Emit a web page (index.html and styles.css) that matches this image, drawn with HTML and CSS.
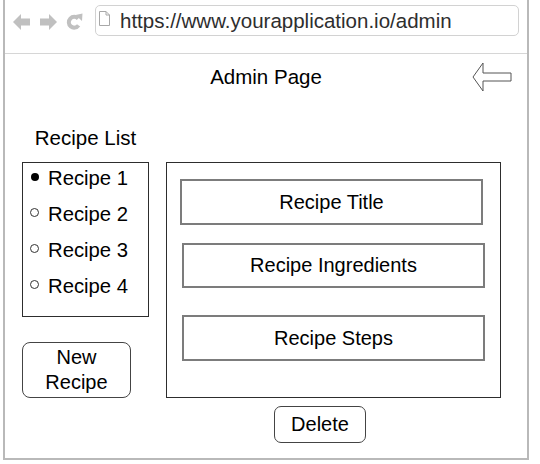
FILE: index.html
```html
<!DOCTYPE html>
<html lang="en">
<head>
<meta charset="utf-8">
<title>Admin Page</title>
<link rel="stylesheet" href="styles.css">
</head>
<body>
<div class="frame">
  <div class="toolbar">
    <svg class="nav-icon nav-back" width="17" height="16" viewBox="0 0 17 16"><polygon points="0,8 8,0 8,4.5 17,4.5 17,11.5 8,11.5 8,16"/></svg>
    <svg class="nav-icon nav-fwd" width="17" height="16" viewBox="0 0 17 16"><polygon points="17,8 9,0 9,4.5 0,4.5 0,11.5 9,11.5 9,16"/></svg>
    <svg class="nav-icon nav-reload" width="17" height="17" viewBox="0 0 17 17"><path d="M12.2 5.6 A5.4 5.4 0 1 0 12.6 12.4" fill="none" stroke="#c0c0c0" stroke-width="4"/><polygon points="9.5,2 16.5,0.5 16,8" fill="#c0c0c0"/></svg>
    <div class="address">
      <svg class="page-icon" width="11" height="15" viewBox="0 0 11 15"><path d="M0.5 0.5 H7 L10.5 4 V14.5 H0.5 Z" fill="none" stroke="#a8a8a8"/><path d="M7 0.5 V4 H10.5" fill="none" stroke="#a8a8a8"/></svg>
      <span class="url">https://www.yourapplication.io/admin</span>
    </div>
  </div>
  <div class="header">
    <h1 class="title">Admin Page</h1>
    <svg class="back-arrow" width="40" height="30" viewBox="0 0 40 30"><polygon points="1,15 11,1 11,11 39,11 39,19 11,19 11,29" fill="#fff" stroke="#555" stroke-width="1"/></svg>
  </div>
  <div class="main">
    <div class="left-col">
      <div class="list-title">Recipe List</div>
      <ul class="recipe-list">
        <li class="recipe-item"><span class="bullet filled"></span>Recipe 1</li>
        <li class="recipe-item"><span class="bullet hollow"></span>Recipe 2</li>
        <li class="recipe-item"><span class="bullet hollow"></span>Recipe 3</li>
        <li class="recipe-item"><span class="bullet hollow"></span>Recipe 4</li>
      </ul>
      <button class="btn btn-new">New<br>Recipe</button>
    </div>
    <div class="right-col">
      <div class="panel">
        <div class="field field-title">Recipe Title</div>
        <div class="field field-ingredients">Recipe Ingredients</div>
        <div class="field field-steps">Recipe Steps</div>
      </div>
      <button class="btn btn-delete">Delete</button>
    </div>
  </div>
</div>
</body>
</html>
```
FILE: styles.css
```css
* { box-sizing: border-box; }
html, body { margin: 0; padding: 0; background: #fff; }
body {
  font-family: "Liberation Sans", Arial, Helvetica, sans-serif;
  color: #000;
  overflow: hidden;
}
.frame {
  margin-left: 3px;
  width: 526px;
  height: 460px;
  border: 2px solid #b9b9b9;
  border-top: none;
}
.toolbar {
  height: 54px;
  border-bottom: 1px solid #d6d6d6;
  display: flex;
  align-items: flex-start;
  padding: 5px 0 0 8px;
}
.nav-icon { fill: #c0c0c0; flex: none; }
.nav-back { margin-top: 9px; }
.nav-fwd { margin-top: 9px; margin-left: 10px; }
.nav-reload { margin-top: 8px; margin-left: 9px; }
.address {
  margin-left: 12px;
  width: 424px;
  height: 31px;
  border: 1px solid #d2d2d2;
  border-radius: 5px;
  display: flex;
  align-items: center;
  padding-left: 3px;
}
.page-icon { flex: none; margin-top: -4px; }
.url {
  margin-left: 10px;
  font-size: 20.5px;
  color: #2e2e2e;
  white-space: nowrap;
}
.header {
  height: 46px;
  display: grid;
  grid-template-columns: 1fr auto 1fr;
  align-items: center;
}
.title {
  grid-column: 2;
  margin: 0;
  font-size: 20.5px;
  font-weight: normal;
  line-height: 24px;
}
.back-arrow { grid-column: 3; justify-self: end; margin-right: 15px; }
.main {
  display: grid;
  grid-template-columns: 127px 335px;
  column-gap: 17px;
  padding-left: 17px;
}
.left-col { display: flex; flex-direction: column; align-items: flex-start; }
.list-title {
  width: 127px;
  text-align: center;
  font-size: 20.5px;
  line-height: 24px;
  margin-top: 26px;
  margin-bottom: 12px;
}
.recipe-list {
  list-style: none;
  margin: 0;
  width: 127px;
  height: 155px;
  border: 1px solid #2d2d2d;
  padding: 3px 0 0 7px;
  display: flex;
  flex-direction: column;
  gap: 12px;
}
.recipe-item {
  display: flex;
  align-items: center;
  font-size: 20.3px;
  line-height: 24px;
}
.bullet {
  width: 9px;
  height: 8px;
  margin-right: 9px;
  display: flex;
  justify-content: center;
  align-items: center;
  flex: none;
}
.bullet.filled::before {
  content: "";
  width: 8px;
  height: 8px;
  border-radius: 50%;
  background: #000;
  margin-top: -3px;
}
.bullet.hollow::before {
  content: "";
  width: 7px;
  height: 7px;
  border-radius: 50%;
  border: 1px solid #333;
  margin-top: -3px;
}
.btn {
  font-family: inherit;
  font-size: 20px;
  color: #000;
  background: #fff;
  border: 1px solid #444;
  padding: 0;
  cursor: pointer;
}
.btn-new {
  margin-top: 25px;
  width: 109px;
  height: 56px;
  border-radius: 8px;
  line-height: 25px;
}
.right-col { display: flex; flex-direction: column; align-items: flex-start; padding-top: 62px; }
.panel {
  width: 335px;
  height: 236px;
  border: 1px solid #2d2d2d;
  padding-top: 16px;
  display: flex;
  flex-direction: column;
}
.field {
  width: 303px;
  border: 2px solid #7c7c7c;
  display: flex;
  align-items: center;
  justify-content: center;
  font-size: 20px;
}
.field-title { height: 46px; margin-left: 13px; }
.field-ingredients { height: 45px; margin-left: 15px; margin-top: 18px; }
.field-steps { height: 46px; margin-left: 15px; margin-top: 27px; }
.btn-delete {
  margin-top: 8px;
  margin-left: 108px;
  width: 92px;
  height: 37px;
  border-radius: 7px;
}
```
